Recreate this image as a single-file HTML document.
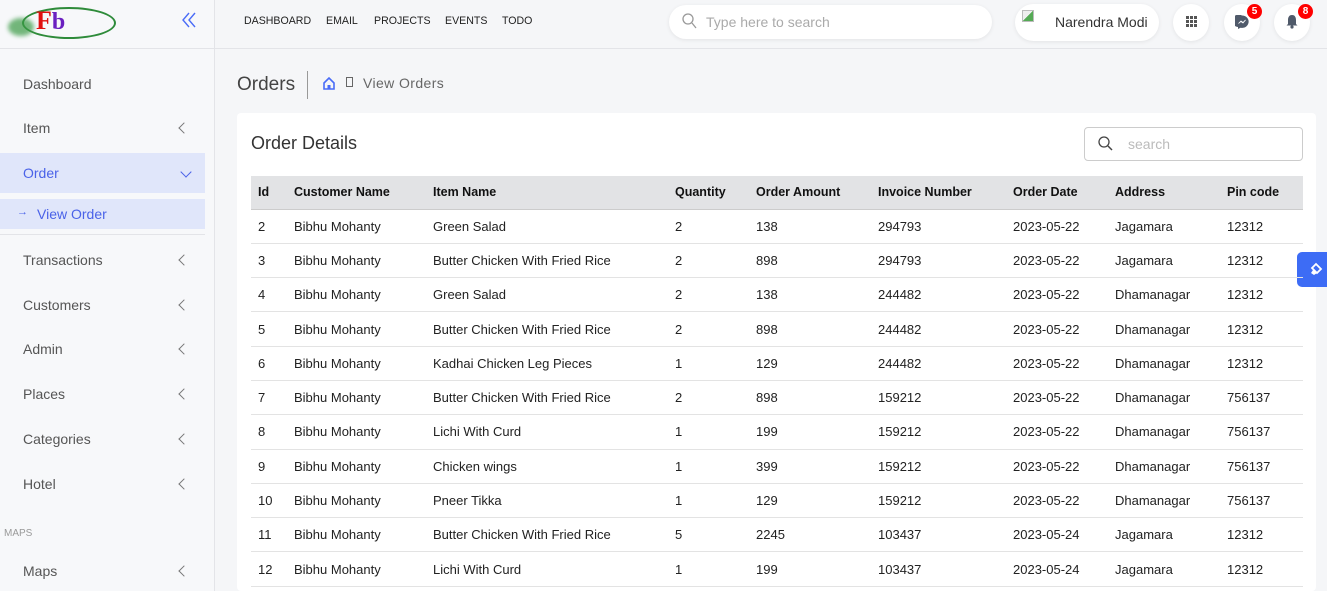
<!DOCTYPE html>
<html><head><meta charset="utf-8"><style>
*{box-sizing:border-box;margin:0;padding:0}
body{width:1327px;height:591px;overflow:hidden;background:#f5f6f8;font-family:"Liberation Sans",Roboto,sans-serif;color:#333;position:relative}
.abs{position:absolute}
.side{left:0;top:0;width:215px;height:591px;border-right:1px solid #e3e4e8;background:#f7f8fa}
.hdr{left:0;top:0;width:1327px;height:49px;border-bottom:1px solid #e3e4e8}
.nav{top:15px;font-size:10.6px;color:#222}
.si{left:23px;font-size:14px;color:#555}
.chev{left:180px;width:8px;height:8px;border-left:1.3px solid #777;border-bottom:1.3px solid #777;transform:rotate(45deg)}
.pill{background:#fff;border-radius:20px;box-shadow:0 1px 4px rgba(0,0,0,.08)}
.badge{width:15px;height:15px;border-radius:50%;background:#f00;color:#fff;font-size:10px;font-weight:bold;text-align:center;line-height:15px}
table{border-collapse:collapse;font-size:13px;color:#222}
th{background:#e2e3e5;text-align:left;font-weight:bold;height:33px;border-bottom:1px solid #ccc;color:#111;font-size:12.5px}
td{height:34.3px;border-bottom:1px solid #e3e3e3}
th,td{padding:0 0 0 7px}
</style></head><body>
<div class="abs side"></div>
<div class="abs hdr"></div>
<div class="abs" style="left:22px;top:7px;width:94px;height:32px;border:2px solid #2e8b3a;border-radius:50%"></div>
<div class="abs" style="left:8px;top:18px;width:26px;height:18px;background:#3a9a45;border-radius:50%;opacity:.7;filter:blur(2px)"></div>
<div class="abs" style="left:36px;top:6px;font:bold 26px 'Liberation Serif',serif;color:#e01010">F<span style="color:#6a1fc0;font-size:24px">b</span></div>
<svg class="abs" style="left:182px;top:12px" width="14" height="16"><path d="M7 1L1 8 7 15M13 1L7 8 13 15" fill="none" stroke="#4a6cf7" stroke-width="1.4"/></svg>
<div class="abs nav" style="left:244px">DASHBOARD</div>
<div class="abs nav" style="left:326px">EMAIL</div>
<div class="abs nav" style="left:374px">PROJECTS</div>
<div class="abs nav" style="left:445px">EVENTS</div>
<div class="abs nav" style="left:502px">TODO</div>
<div class="abs pill" style="left:669px;top:5px;width:323px;height:34px"></div>
<svg class="abs" style="left:682px;top:13px" width="15" height="16"><circle cx="6" cy="6" r="5" fill="none" stroke="#999" stroke-width="1.3"/><line x1="10" y1="10" x2="14" y2="15" stroke="#999" stroke-width="1.3"/></svg>
<div class="abs" style="left:706px;top:14px;font-size:14px;color:#aaa">Type here to search</div>
<div class="abs pill" style="left:1015px;top:4px;width:144px;height:37px"></div>
<div class="abs" style="left:1022px;top:10px;width:12px;height:12px;border:1px solid #bbb;background:linear-gradient(135deg,#eee 50%,#5a5 50%)"></div>
<div class="abs" style="left:1055px;top:14px;font-size:14px;color:#333;font-weight:500">Narendra Modi</div>
<div class="abs pill" style="left:1173px;top:4px;width:36px;height:37px;border-radius:50%"></div>
<div class="abs" style="left:1186px;top:16px;width:11px;height:11px;background:repeating-linear-gradient(90deg,#555 0 3px,transparent 3px 4px);-webkit-mask:repeating-linear-gradient(0deg,#000 0 3px,transparent 3px 4px)"></div>
<div class="abs pill" style="left:1224px;top:4px;width:36px;height:37px;border-radius:50%"></div>
<svg class="abs" style="left:1235px;top:15px" width="14" height="14"><path d="M7 0.5A6.5 6.2 0 1 0 3 12L3 14 5.5 12.7A6.5 6.2 0 1 0 7 0.5Z" fill="#505a6a"/><path d="M3.5 8.5L6 6 8 7.5 10.5 5 8 8 6 6.5Z" fill="#fff" stroke="#fff" stroke-width=".8"/></svg>
<div class="abs badge" style="left:1247px;top:4px">5</div>
<div class="abs pill" style="left:1274px;top:4px;width:36px;height:37px;border-radius:50%"></div>
<svg class="abs" style="left:1285px;top:14px" width="14" height="15"><path d="M7 1C4 1 3 3.5 3 6V10L1.5 11.5H12.5L11 10V6C11 3.5 10 1 7 1Z" fill="#505a6a"/><circle cx="7" cy="13" r="1.6" fill="#505a6a"/></svg>
<div class="abs badge" style="left:1298px;top:4px">8</div>

<div class="abs si" style="top:76px">Dashboard</div>
<div class="abs si" style="top:120px">Item</div><div class="abs chev" style="top:124px"></div>
<div class="abs" style="left:0;top:153px;width:205px;height:40px;background:#e0e6fa"></div>
<div class="abs si" style="top:165px;color:#4a62e8">Order</div>
<div class="abs" style="left:182px;top:168px;width:8px;height:8px;border-right:1.3px solid #4a62e8;border-bottom:1.3px solid #4a62e8;transform:rotate(45deg)"></div>
<div class="abs" style="left:0;top:199px;width:205px;height:30px;background:#e0e6fa"></div>
<div class="abs" style="left:17px;top:206px;font-size:11px;color:#4a62e8">→</div>
<div class="abs si" style="left:37px;top:206px;color:#4a62e8">View Order</div>
<div class="abs" style="left:0;top:234px;width:205px;height:1px;background:#e3e4e8"></div>
<div class="abs si" style="top:252px">Transactions</div><div class="abs chev" style="top:256px"></div>
<div class="abs si" style="top:297px">Customers</div><div class="abs chev" style="top:301px"></div>
<div class="abs si" style="top:341px">Admin</div><div class="abs chev" style="top:345px"></div>
<div class="abs si" style="top:386px">Places</div><div class="abs chev" style="top:390px"></div>
<div class="abs si" style="top:431px">Categories</div><div class="abs chev" style="top:435px"></div>
<div class="abs si" style="top:476px">Hotel</div><div class="abs chev" style="top:480px"></div>
<div class="abs" style="left:4px;top:528px;font-size:10px;color:#999">MAPS</div>
<div class="abs si" style="top:563px">Maps</div><div class="abs chev" style="top:567px"></div>

<div class="abs" style="left:237px;top:74px;font-size:19px;color:#444">Orders</div>
<div class="abs" style="left:307px;top:71px;width:1px;height:28px;background:#999"></div>
<svg class="abs" style="left:323px;top:77px" width="12" height="13"><path d="M1 6L6 1 11 6V12H1Z" fill="none" stroke="#4a6cf7" stroke-width="1.6"/><rect x="4.5" y="8" width="3" height="4" fill="#4a6cf7"/></svg>
<div class="abs" style="left:346px;top:77px;width:7px;height:10px;border:1px solid #666"></div>
<div class="abs" style="left:363px;top:75px;font-size:14px;color:#666;letter-spacing:.4px">View Orders</div>

<div class="abs" style="left:237px;top:113px;width:1079px;height:478px;background:#fff;border-radius:4px"></div>
<div class="abs" style="left:251px;top:133px;font-size:18px;color:#333;font-weight:500">Order Details</div>
<div class="abs" style="left:1084px;top:127px;width:219px;height:34px;border:1px solid #ccc;border-radius:4px"></div>
<svg class="abs" style="left:1098px;top:136px" width="15" height="15"><circle cx="6" cy="6" r="5" fill="none" stroke="#444" stroke-width="1.3"/><line x1="10" y1="10" x2="14" y2="14" stroke="#444" stroke-width="1.5"/></svg>
<div class="abs" style="left:1128px;top:136px;font-size:14px;color:#bbb">search</div>
<div class="abs" style="left:1297px;top:252px;width:30px;height:35px;background:#3d6cf5;border-radius:5px 0 0 5px"></div>
<svg class="abs" style="left:1310px;top:262px" width="14" height="14"><path d="M2 6L6 2 11 7 7 11Z" fill="none" stroke="#fff" stroke-width="1.8"/><path d="M3 8L7 11 4 13 1 11Z" fill="#fff"/></svg>

<table class="abs" style="left:251px;top:176px;width:1052px">
<tr><th style="width:36px">Id</th><th style="width:139px">Customer Name</th><th style="width:242px">Item Name</th><th style="width:81px">Quantity</th><th style="width:122px">Order Amount</th><th style="width:135px">Invoice Number</th><th style="width:102px">Order Date</th><th style="width:112px">Address</th><th>Pin code</th></tr>
<tr><td>2</td><td>Bibhu Mohanty</td><td>Green Salad</td><td>2</td><td>138</td><td>294793</td><td>2023-05-22</td><td>Jagamara</td><td>12312</td></tr>
<tr><td>3</td><td>Bibhu Mohanty</td><td>Butter Chicken With Fried Rice</td><td>2</td><td>898</td><td>294793</td><td>2023-05-22</td><td>Jagamara</td><td>12312</td></tr>
<tr><td>4</td><td>Bibhu Mohanty</td><td>Green Salad</td><td>2</td><td>138</td><td>244482</td><td>2023-05-22</td><td>Dhamanagar</td><td>12312</td></tr>
<tr><td>5</td><td>Bibhu Mohanty</td><td>Butter Chicken With Fried Rice</td><td>2</td><td>898</td><td>244482</td><td>2023-05-22</td><td>Dhamanagar</td><td>12312</td></tr>
<tr><td>6</td><td>Bibhu Mohanty</td><td>Kadhai Chicken Leg Pieces</td><td>1</td><td>129</td><td>244482</td><td>2023-05-22</td><td>Dhamanagar</td><td>12312</td></tr>
<tr><td>7</td><td>Bibhu Mohanty</td><td>Butter Chicken With Fried Rice</td><td>2</td><td>898</td><td>159212</td><td>2023-05-22</td><td>Dhamanagar</td><td>756137</td></tr>
<tr><td>8</td><td>Bibhu Mohanty</td><td>Lichi With Curd</td><td>1</td><td>199</td><td>159212</td><td>2023-05-22</td><td>Dhamanagar</td><td>756137</td></tr>
<tr><td>9</td><td>Bibhu Mohanty</td><td>Chicken wings</td><td>1</td><td>399</td><td>159212</td><td>2023-05-22</td><td>Dhamanagar</td><td>756137</td></tr>
<tr><td>10</td><td>Bibhu Mohanty</td><td>Pneer Tikka</td><td>1</td><td>129</td><td>159212</td><td>2023-05-22</td><td>Dhamanagar</td><td>756137</td></tr>
<tr><td>11</td><td>Bibhu Mohanty</td><td>Butter Chicken With Fried Rice</td><td>5</td><td>2245</td><td>103437</td><td>2023-05-24</td><td>Jagamara</td><td>12312</td></tr>
<tr><td>12</td><td>Bibhu Mohanty</td><td>Lichi With Curd</td><td>1</td><td>199</td><td>103437</td><td>2023-05-24</td><td>Jagamara</td><td>12312</td></tr>
</table>
</body></html>
